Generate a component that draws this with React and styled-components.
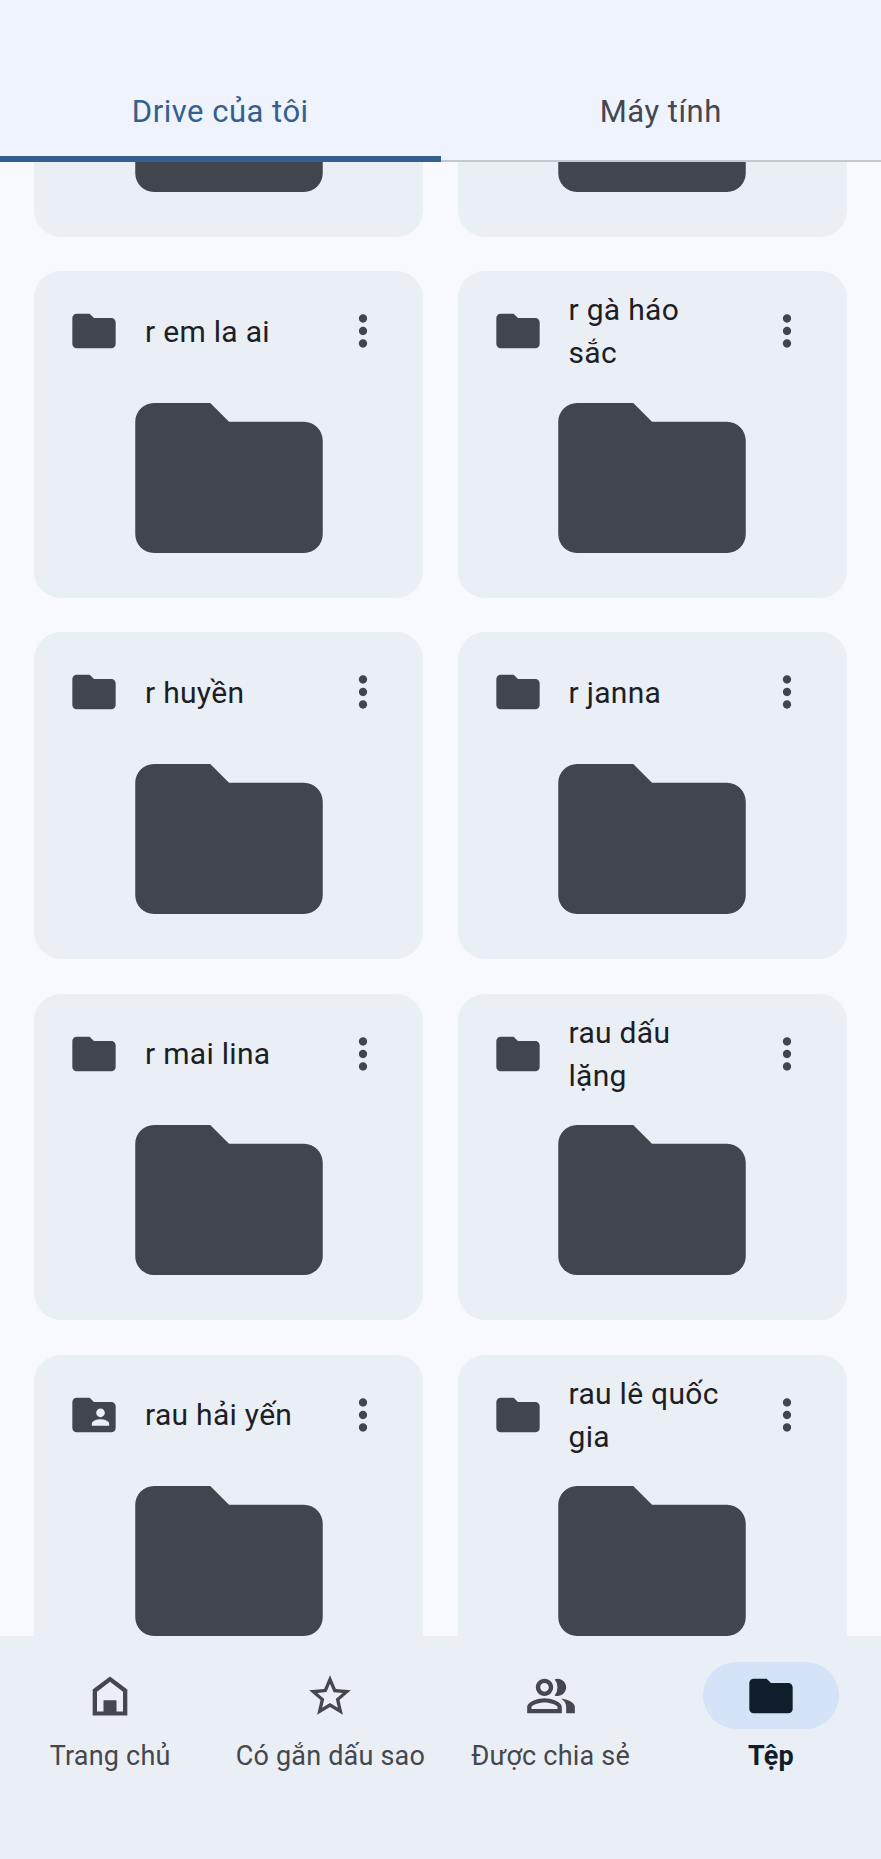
import React from "react";
import styled, { createGlobalStyle } from "styled-components";
import { MdFolderShared, MdMoreVert, MdOutlinePeopleAlt, MdStarBorder } from "react-icons/md";

const Global = createGlobalStyle`
  html, body { margin: 0; padding: 0; background: #f8f9ff; }
  * { box-sizing: border-box; }
`;

const Page = styled.div`
  width: 881px;
  height: 1859px;
  display: flex;
  flex-direction: column;
  overflow: hidden;
  background: #f8f9ff;
  font-family: Roboto, "Noto Sans", sans-serif;
`;

const TabBar = styled.header`
  flex: 0 0 162px;
  display: flex;
  background: #eef3fd;
  border-bottom: 2px solid #c5c8cd;
  position: relative;
  z-index: 2;
`;

const Tab = styled.div`
  flex: 1;
  display: flex;
  align-items: center;
  justify-content: center;
  padding-top: 62px;
  position: relative;
  font-size: 31px;
  font-weight: 450;
  letter-spacing: 0.5px;
  color: ${(p) => (p.$active ? "#33608f" : "#44474e")};

  &::after {
    content: "";
    display: ${(p) => (p.$active ? "block" : "none")};
    position: absolute;
    left: 0;
    right: 0;
    bottom: -2px;
    height: 6px;
    background: #33608f;
  }
`;

const Scroller = styled.main`
  flex: 1;
  min-height: 0;
  overflow: hidden;
`;

const Grid = styled.div`
  display: grid;
  grid-template-columns: 389px 389px;
  column-gap: 34.5px;
  row-gap: 34.7px;
  padding: 0 34px;
  margin-top: -252px;
`;

const Card = styled.article`
  height: 326.5px;
  padding: 35px 35px 0;
  border-radius: 27px;
  background: #eaeff5;
`;

const CardHead = styled.div`
  display: flex;
  align-items: center;
  height: 50px;
  color: #41454e;
`;

const KindIcon = styled.span`
  flex: 0 0 52px;
  display: flex;
  margin: 0 25px 0 -1px;
`;

const Title = styled.div`
  flex: 0 0 160px;
  font-size: 30px;
  letter-spacing: 0.3px;
  line-height: 43px;
  color: #1c2026;
`;

const More = styled.span`
  display: flex;
  margin-left: auto;
  color: #41454e;
`;

const Preview = styled.div`
  display: flex;
  justify-content: center;
  margin-top: 46.5px;
  color: #41454e;
`;

const BottomNav = styled.nav`
  flex: 0 0 223px;
  display: grid;
  grid-template-columns: repeat(4, 220.25px);
  padding-top: 26px;
  background: #eaeff5;
  position: relative;
  z-index: 2;
`;

const NavItem = styled.div`
  display: flex;
  flex-direction: column;
  align-items: center;
  gap: 9px;
  color: ${(p) => (p.$active ? "#101d2a" : "#44474e")};
`;

const IconPill = styled.div`
  width: 136px;
  height: 67px;
  border-radius: 34px;
  display: flex;
  align-items: center;
  justify-content: center;
  background: ${(p) => (p.$active ? "#d5e3f8" : "transparent")};
`;

const NavLabel = styled.div`
  font-size: 27px;
  line-height: 36px;
  letter-spacing: 0.2px;
  white-space: nowrap;
  font-weight: ${(p) => (p.$active ? 700 : 450)};
`;

const FOLDER = "M10 4H4c-1.1 0-2 .9-2 2v12c0 1.1.9 2 2 2h16c1.1 0 2-.9 2-2V8c0-1.1-.9-2-2-2h-8l-2-2z";

const FolderGlyph = ({ size = 52 }) => (
  <svg width={size} height={size} viewBox="0 0 24 24" fill="currentColor" style={{ display: "block" }}>
    <path d={FOLDER} />
  </svg>
);

const LargeFolder = () => (
  <svg width="188" height="150" viewBox="2 4 20 16" fill="currentColor" style={{ display: "block" }}>
    <path d={FOLDER} />
  </svg>
);

const HomeGlyph = () => (
  <svg width="52" height="52" viewBox="0 0 24 24" fill="currentColor" style={{ display: "block" }}>
    <path fillRule="evenodd" d="M12 3 4 9v12h16V9l-8-6zm0 2.4L18 10v9.2h-3V14H9v5.2H6V10l6-4.6z" />
  </svg>
);

const rows = [
  [{ name: "" }, { name: "" }],
  [{ name: "r em la ai" }, { name: "r gà háo sắc" }],
  [{ name: "r huyền" }, { name: "r janna" }],
  [{ name: "r mai lina" }, { name: "rau dấu lặng" }],
  [{ name: "rau hải yến", shared: true }, { name: "rau lê quốc gia" }],
];

const FolderCard = ({ name, shared }) => (
  <Card>
    <CardHead>
      <KindIcon>{shared ? <MdFolderShared size={52} /> : <FolderGlyph />}</KindIcon>
      <Title>{name}</Title>
      <More><MdMoreVert size={50} /></More>
    </CardHead>
    <Preview><LargeFolder /></Preview>
  </Card>
);

const navItems = [
  { label: "Trang chủ", icon: <HomeGlyph /> },
  { label: "Có gắn dấu sao", icon: <MdStarBorder size={50} /> },
  { label: "Được chia sẻ", icon: <MdOutlinePeopleAlt size={52} /> },
  { label: "Tệp", icon: <FolderGlyph />, active: true },
];

export default function App() {
  return (
    <Page>
      <Global />
      <TabBar>
        <Tab $active>Drive của tôi</Tab>
        <Tab>Máy tính</Tab>
      </TabBar>
      <Scroller>
        <Grid>
          {rows.flat().map((f, i) => (
            <FolderCard key={i} {...f} />
          ))}
        </Grid>
      </Scroller>
      <BottomNav>
        {navItems.map((n) => (
          <NavItem key={n.label} $active={n.active}>
            <IconPill $active={n.active}>{n.icon}</IconPill>
            <NavLabel $active={n.active}>{n.label}</NavLabel>
          </NavItem>
        ))}
      </BottomNav>
    </Page>
  );
}
